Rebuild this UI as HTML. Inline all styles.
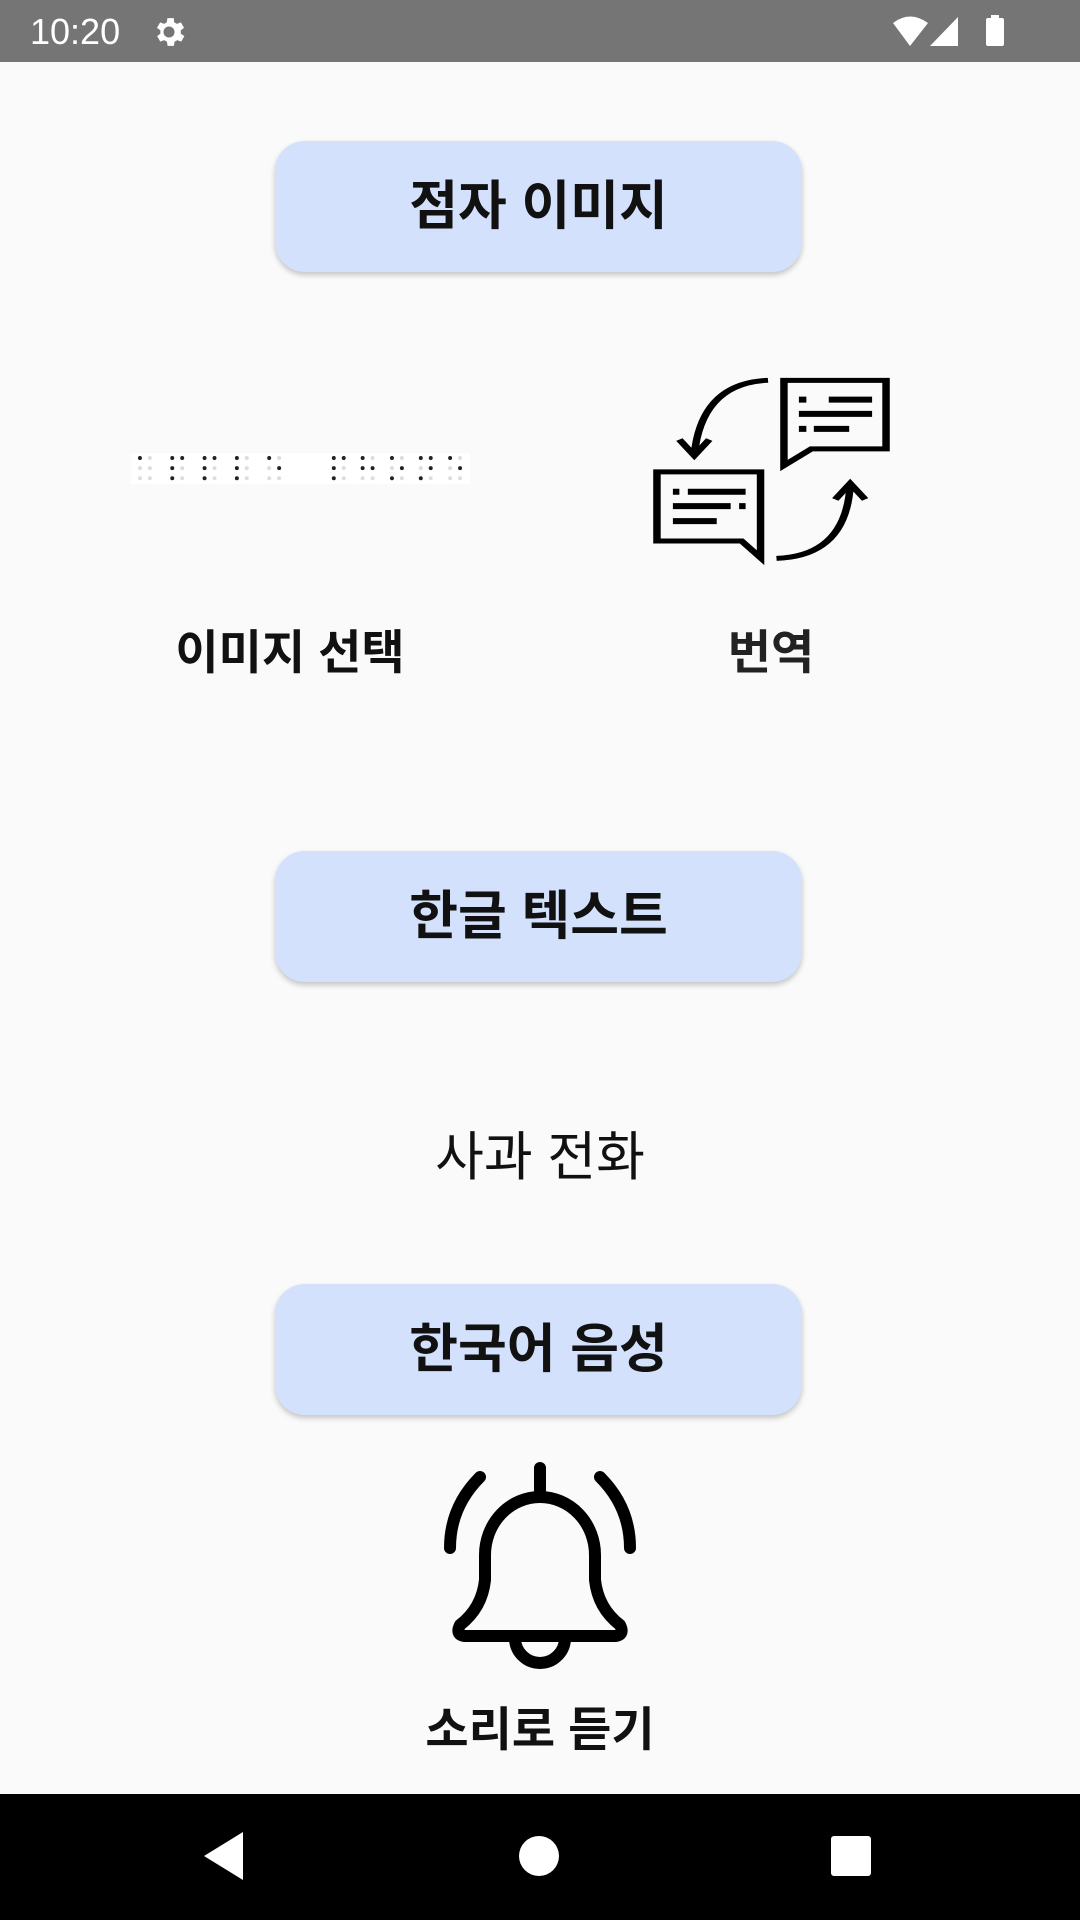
<!DOCTYPE html>
<html><head><meta charset="utf-8"><style>
body{margin:0;width:1080px;height:1920px;background:#fafafa;position:relative;overflow:hidden;font-family:"Liberation Sans","Noto Sans CJK KR",sans-serif;color:#111}
.abs{position:absolute}
.btn{position:absolute;left:275px;width:527px;height:131px;background:#d3e1fc;border-radius:30px;box-shadow:0 3px 6px rgba(0,0,0,.22);font-weight:bold;font-size:53px;text-align:center;line-height:131px;color:#111}
.lbl{position:absolute;font-size:47px;text-align:center;width:400px}
</style></head><body>
<div class="abs" style="left:0;top:0;width:1080px;height:62px;background:#757575"></div>
<div class="abs" style="left:30px;top:11px;color:#fff;font-size:36px">10:20</div>
<svg class="abs" style="left:150px;top:13px" width="38" height="38" viewBox="0 0 24 24"><path fill="#fff" d="M19.4 13a7.5 7.5 0 000-2l2.1-1.6-2-3.5-2.5 1a7.6 7.6 0 00-1.7-1L15 3.2h-4l-.4 2.7a7.6 7.6 0 00-1.7 1l-2.5-1-2 3.5L6.6 11a7.5 7.5 0 000 2l-2.1 1.6 2 3.5 2.5-1a7.6 7.6 0 001.7 1l.4 2.7h4l.4-2.7a7.6 7.6 0 001.7-1l2.5 1 2-3.5zM12 15.5a3.5 3.5 0 110-7 3.5 3.5 0 010 7z"/></svg>
<svg class="abs" style="left:890px;top:14px" width="130" height="36" viewBox="0 0 130 36"><path fill="#fff" d="M3 9 Q20 -4 38 9 L20 32z"/><path fill="#fff" d="M68 3 L68 32 L40 32z"/><rect x="96" y="4" width="18" height="28" rx="2" fill="#fff"/><rect x="101" y="1" width="8" height="4" fill="#fff"/></svg>

<div class="btn" style="top:141px">점자 이미지</div>
<svg class="abs" style="left:131px;top:453px" width="339" height="31" viewBox="22 280 682 92" preserveAspectRatio="none">
<rect x="22" y="280" width="682" height="92" fill="#fff"/>
<g fill="#ddd">
<ellipse cx="60" cy="295" rx="4" ry="6"/><ellipse cx="40" cy="325" rx="4" ry="6"/><ellipse cx="60" cy="325" rx="4" ry="6"/><ellipse cx="40" cy="355" rx="4" ry="6"/><ellipse cx="60" cy="355" rx="4" ry="6"/>
<ellipse cx="125" cy="325" rx="4" ry="6"/><ellipse cx="125" cy="355" rx="4" ry="6"/>
<ellipse cx="190" cy="325" rx="4" ry="6"/><ellipse cx="190" cy="355" rx="4" ry="6"/>
<ellipse cx="255" cy="295" rx="4" ry="6"/><ellipse cx="255" cy="325" rx="4" ry="6"/><ellipse cx="255" cy="355" rx="4" ry="6"/>
<ellipse cx="320" cy="295" rx="4" ry="6"/><ellipse cx="300" cy="325" rx="4" ry="6"/><ellipse cx="300" cy="355" rx="4" ry="6"/><ellipse cx="320" cy="355" rx="4" ry="6"/>
<ellipse cx="450" cy="325" rx="4" ry="6"/><ellipse cx="450" cy="355" rx="4" ry="6"/>
<ellipse cx="508" cy="295" rx="4" ry="6"/><ellipse cx="488" cy="355" rx="4" ry="6"/><ellipse cx="508" cy="355" rx="4" ry="6"/>
<ellipse cx="567" cy="295" rx="4" ry="6"/><ellipse cx="547" cy="325" rx="4" ry="6"/><ellipse cx="567" cy="355" rx="4" ry="6"/>
<ellipse cx="605" cy="325" rx="4" ry="6"/><ellipse cx="625" cy="355" rx="4" ry="6"/>
<ellipse cx="684" cy="295" rx="4" ry="6"/><ellipse cx="664" cy="325" rx="4" ry="6"/><ellipse cx="664" cy="355" rx="4" ry="6"/><ellipse cx="684" cy="355" rx="4" ry="6"/>
</g>
<g fill="#222">
<ellipse cx="40" cy="295" rx="4" ry="6"/>
<ellipse cx="105" cy="295" rx="4" ry="6"/><ellipse cx="125" cy="295" rx="4" ry="6"/><ellipse cx="105" cy="325" rx="4" ry="6"/><ellipse cx="105" cy="355" rx="4" ry="6"/>
<ellipse cx="170" cy="295" rx="4" ry="6"/><ellipse cx="190" cy="295" rx="4" ry="6"/><ellipse cx="170" cy="325" rx="4" ry="6"/><ellipse cx="170" cy="355" rx="4" ry="6"/>
<ellipse cx="235" cy="295" rx="4" ry="6"/><ellipse cx="235" cy="325" rx="4" ry="6"/><ellipse cx="235" cy="355" rx="4" ry="6"/>
<ellipse cx="300" cy="295" rx="4" ry="6"/><ellipse cx="320" cy="325" rx="4" ry="6"/>
<ellipse cx="430" cy="295" rx="4" ry="6"/><ellipse cx="450" cy="295" rx="4" ry="6"/><ellipse cx="430" cy="325" rx="4" ry="6"/><ellipse cx="430" cy="355" rx="4" ry="6"/>
<ellipse cx="488" cy="295" rx="4" ry="6"/><ellipse cx="488" cy="325" rx="4" ry="6"/><ellipse cx="508" cy="325" rx="4" ry="6"/>
<ellipse cx="547" cy="295" rx="4" ry="6"/><ellipse cx="567" cy="325" rx="4" ry="6"/><ellipse cx="547" cy="355" rx="4" ry="6"/>
<ellipse cx="605" cy="295" rx="4" ry="6"/><ellipse cx="625" cy="295" rx="4" ry="6"/><ellipse cx="625" cy="325" rx="4" ry="6"/><ellipse cx="605" cy="355" rx="4" ry="6"/>
<ellipse cx="664" cy="295" rx="4" ry="6"/><ellipse cx="684" cy="325" rx="4" ry="6"/>
</g></svg>

<svg class="abs" style="left:647px;top:373px" width="249" height="193" viewBox="1060 40 500 580" preserveAspectRatio="none">
<g fill="none" stroke="#000" stroke-width="15">
<path d="M1335 62H1540V268H1390L1335 318Z"/>
<path d="M1080 337H1288V595L1250 545H1080Z"/>
<path d="M1303 62Q1170 70 1155 285"/><path d="M1125 240L1155 288L1185 240"/>
<path d="M1320 597Q1460 590 1468 375"/><path d="M1438 420L1468 372L1498 420"/>
</g>
<g stroke="#000" stroke-width="18">
<path d="M1365 120H1380M1425 120H1512M1365 163H1512M1365 208H1380M1395 208H1466"/>
<path d="M1112 397H1125M1142 397H1258M1112 440H1228M1245 440H1258M1112 485H1200"/>
</g></svg>

<div class="lbl" style="left:90px;top:614px;font-weight:bold">이미지 선택</div>
<div class="lbl" style="left:571px;top:614px;font-weight:bold;color:#222">번역</div>

<div class="btn" style="top:851px">한글 텍스트</div>
<div class="lbl" style="left:340px;top:1115px;font-size:53px">사과 전화</div>
<div class="btn" style="top:1284px">한국어 음성</div>

<svg class="abs" style="left:420px;top:1440px" width="240" height="240" viewBox="0 0 240 240">
<g fill="none" stroke="#000" stroke-width="12" stroke-linecap="round" stroke-linejoin="round">
<path d="M120 28V55"/>
<path d="M65 140V115A55 58 0 0 1 175 115V140Q178 168 200 185Q205 195 195 196H45Q35 195 40 185Q62 168 65 140Z"/>
<path d="M95 198A25 25 0 0 0 145 198"/>
<path d="M60 37Q30 67 30 108"/><path d="M180 37Q210 67 210 108"/>
</g></svg>
<div class="lbl" style="left:340px;top:1691px;font-weight:bold">소리로 듣기</div>

<div class="abs" style="left:0;top:1794px;width:1080px;height:126px;background:#000"></div>
<svg class="abs" style="left:0;top:1794px" width="1080" height="126" viewBox="0 0 1080 126">
<path d="M243 38V86L204 62Z" fill="#fff"/>
<circle cx="539" cy="62" r="20" fill="#fff"/>
<rect x="831" y="42" width="40" height="40" rx="3" fill="#fff"/>
</svg>
</body></html>
